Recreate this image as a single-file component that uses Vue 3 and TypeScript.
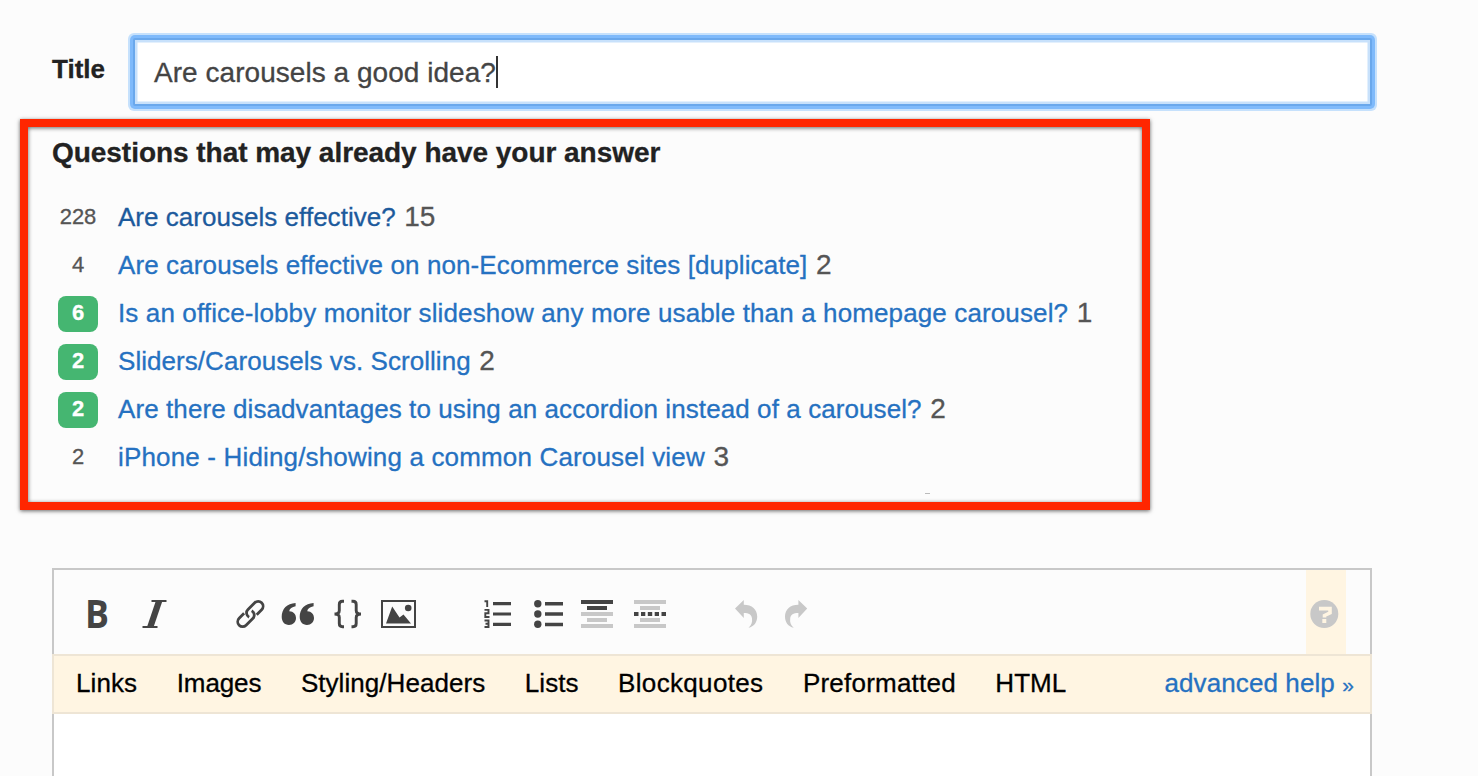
<script setup lang="ts">
interface Suggestion {
  votes: number
  answered: boolean
  visited?: boolean
  title: string
  tracking: number
  answers: number
}

interface Topic {
  name: string
  tracking: number
}

const title = 'Are carousels a good idea?'

const suggestions: Suggestion[] = [
  { votes: 228, answered: false, visited: true, title: 'Are carousels effective?', tracking: 0.03, answers: 15 },
  { votes: 4, answered: false, title: 'Are carousels effective on non-Ecommerce sites [duplicate]', tracking: 0.11, answers: 2 },
  { votes: 6, answered: true, title: 'Is an office-lobby monitor slideshow any more usable than a homepage carousel?', tracking: 0.125, answers: 1 },
  { votes: 2, answered: true, title: 'Sliders/Carousels vs. Scrolling', tracking: 0.05, answers: 2 },
  { votes: 2, answered: true, title: 'Are there disadvantages to using an accordion instead of a carousel?', tracking: 0.085, answers: 2 },
  { votes: 2, answered: false, title: 'iPhone - Hiding/showing a common Carousel view', tracking: 0.16, answers: 3 },
]

const helpTopics: Topic[] = [
  { name: 'Links', tracking: 0.1 },
  { name: 'Images', tracking: -0.1 },
  { name: 'Styling/Headers', tracking: 0.06 },
  { name: 'Lists', tracking: 0.05 },
  { name: 'Blockquotes', tracking: 0.34 },
  { name: 'Preformatted', tracking: 0.22 },
  { name: 'HTML', tracking: 0 },
]
</script>

<template>
  <main class="page">
    <div class="title-row">
      <label class="title-label">Title</label>
      <div class="title-input"><span>{{ title }}</span><i class="caret"></i></div>
    </div>

    <section class="suggestions">
      <h2>Questions that may already have your answer</h2>
      <ul>
        <li v-for="s in suggestions" :key="s.title">
          <span class="votes" :class="{ answered: s.answered }">{{ s.votes }}</span>
          <a :class="{ visited: s.visited }" :style="{ letterSpacing: s.tracking + 'px' }">{{ s.title }}</a>
          <span class="answers">{{ s.answers }}</span>
        </li>
      </ul>
      <i class="speck"></i>
    </section>

    <section class="editor">
      <div class="toolbar">
        <svg class="ico bold" width="20" height="28" viewBox="0 0 20 28">
          <text x="-3" y="27.7" font-size="38.5" font-weight="700" textLength="24" lengthAdjust="spacingAndGlyphs">B</text>
        </svg>
        <svg class="ico italic" width="25" height="28" viewBox="0 0 25 28">
          <path d="M9.5 1H24.5M.5 27H15.5" fill="none" stroke="#444" stroke-width="2" />
          <path d="M13.8 1H20.4L11.6 27H5Z" />
        </svg>
        <svg class="ico link" width="30" height="28" viewBox="0 0 30 28">
          <g transform="translate(14.4 14) rotate(-45)" fill="none" stroke="#444" stroke-width="2.8">
            <path d="M-4 -4.9H-11A4.9 4.9 0 0 0 -11 4.9H-1.5A4.9 4.9 0 0 0 3.2 -1.4" />
            <path d="M4 4.9H11A4.9 4.9 0 0 0 11 -4.9H1.5A4.9 4.9 0 0 0 -3.2 1.4" />
          </g>
        </svg>
        <svg class="ico quote" width="34" height="28" viewBox="0 0 34 28">
          <path d="M14.6 3V6.2C11 6.8 8.7 8.4 8.2 11.2C12 11 15 14 15 18C15 22 12 25 8 25C3.5 25 .7 21.7 .7 16.8C.7 9 6 3.4 14.6 3Z" />
          <path transform="translate(18)" d="M14.6 3V6.2C11 6.8 8.7 8.4 8.2 11.2C12 11 15 14 15 18C15 22 12 25 8 25C3.5 25 .7 21.7 .7 16.8C.7 9 6 3.4 14.6 3Z" />
        </svg>
        <svg class="ico code" width="28" height="28" viewBox="0 0 28 28">
          <path d="M10 1.3H8.5Q5.3 1.3 5.3 4.5V10.5Q5.3 14 .5 14Q5.3 14 5.3 17.5V23.5Q5.3 26.7 8.5 26.7H10M17.5 1.3H19Q22.2 1.3 22.2 4.5V10.5Q22.2 14 27 14Q22.2 14 22.2 17.5V23.5Q22.2 26.7 19 26.7H17.5" fill="none" stroke="#444" stroke-width="2.9" />
        </svg>
        <svg class="ico image" width="35" height="28" viewBox="0 0 35 28">
          <rect x="1" y="1" width="33" height="26" fill="none" stroke="#444" stroke-width="2" />
          <path d="M5 23.5L11.2 6.5L18.5 17.5L22.5 14.5L30 23.5Z" />
          <circle cx="27.2" cy="8" r="3.3" />
        </svg>
        <svg class="ico ol" width="27" height="28" viewBox="0 0 27 28">
          <path d="M9 2H27V5.2H9ZM9 12.4H27V15.6H9ZM9 22.8H27V26H9Z" />
          <path d="M.5 1.2H3.2V7M.5 9.9H4.5V13.3H1.3V17H5.5M.5 20.5H4.5V27H.5M1.5 23.7H4.5" fill="none" stroke="#444" stroke-width="1.9" />
        </svg>
        <svg class="ico ul" width="29" height="28" viewBox="0 0 29 28">
          <circle cx="3.8" cy="3.8" r="3.7" /><circle cx="3.8" cy="14" r="3.7" /><circle cx="3.8" cy="24.3" r="3.7" />
          <path d="M11 2H29V5.5H11ZM11 12.3H29V15.8H11ZM11 22.7H29V26.2H11Z" />
        </svg>
        <svg class="ico heading" width="32" height="28" viewBox="0 0 32 28">
          <path d="M0 0H32V4H0ZM6 6H26V10H6Z" />
          <path class="pale" d="M0 12H32V16H0ZM6 18H26V22H6ZM0 24H32V28H0Z" />
        </svg>
        <svg class="ico rule" width="32" height="28" viewBox="0 0 32 28">
          <path class="pale" d="M0 0H32V4H0ZM6 6H26V10H6ZM6 18H26V22H6ZM0 24H32V28H0Z" />
          <path d="M0 12H4.500V16H0ZM7 12H11.300V16H7ZM13.800 12H18.200V16H13.800ZM20.700 12H25V16H20.700ZM27.500 12H32V16H27.500Z" />
        </svg>
        <svg class="ico undo" width="23" height="28" viewBox="0 0 23 28">
          <path class="pale" d="M0 8.6L8.8 0V4.8C17 4.8 22.2 9.5 22.2 16.5C22.2 22.5 19 26.5 13.5 27.8C16.5 25 17.5 22.5 17 18.5C16.5 14.5 14 13 8.8 13V18Z" />
        </svg>
        <svg class="ico redo" width="23" height="28" viewBox="0 0 23 28">
          <path class="pale" transform="translate(22.2) scale(-1 1)" d="M0 8.6L8.8 0V4.8C17 4.8 22.2 9.5 22.2 16.5C22.2 22.5 19 26.5 13.5 27.8C16.5 25 17.5 22.5 17 18.5C16.5 14.5 14 13 8.8 13V18Z" />
        </svg>
        <div class="help-toggle">
          <svg class="ico" width="29" height="28" viewBox="0 0 29 28">
            <circle class="pale" cx="14.3" cy="14" r="14" />
            <path d="M9 8.6H20V12.8L14.5 15.5V17.5" fill="none" stroke="#fff5e2" stroke-width="3.6" />
            <path d="M12.3 19H16.3V23H12.3Z" fill="#fff5e2" />
          </svg>
        </div>
      </div>
      <nav class="help-bar">
        <span v-for="t in helpTopics" :key="t.name" :style="{ letterSpacing: t.tracking + 'px' }">{{ t.name }}</span>
        <a>advanced help <small>»</small></a>
      </nav>
      <div class="text-area"></div>
    </section>
  </main>
</template>

<style>
body {
  background: #fcfcfc;
}
</style>

<style scoped>
.page {
  box-sizing: border-box;
  height: 776px;
  overflow: hidden;
  padding-top: 38px;
  background: #fcfcfc;
  font-family: "Liberation Sans", Arial, sans-serif;
  font-size: 26px;
  color: #444;
  -webkit-text-stroke: 0.3px currentColor;
}
.title-row {
  display: flex;
  height: 68px;
  padding-left: 52px;
}
.title-label {
  width: 81px;
  line-height: 62px;
  font-weight: 700;
  color: #222;
}
.title-input {
  box-sizing: border-box;
  display: flex;
  align-items: center;
  width: 1239px;
  height: 68px;
  padding-left: 19px;
  border: 2px solid #6aa8ec;
  border-radius: 2px;
  background: #fff;
  box-shadow: inset 0 0 0 2.5px #c8e1fb, 0 0 0 3px #7fbafb, 0 0 0 5px #c6e1fc;
  font-size: 28px;
  letter-spacing: 0.04px;
}
.title-input span {
  padding-top: 2px;
}
.caret {
  width: 2px;
  height: 32px;
  background: #333;
}
.suggestions {
  position: relative;
  box-sizing: border-box;
  width: 1130px;
  height: 391px;
  margin: 13px 0 0 20px;
  padding: 10px 0 0 24px;
  border: 8px solid #ff2600;
  box-shadow: 0 1px 4px rgba(0, 0, 0, 0.6), inset 0 1px 4px rgba(0, 0, 0, 0.6);
}
h2 {
  margin: 0;
  line-height: 32px;
  font-size: 28px;
  letter-spacing: -0.04px;
  color: #222;
}
ul {
  margin: 23px 0 0;
  padding: 0;
  list-style: none;
}
li {
  display: flex;
  height: 48px;
  padding-left: 6px;
  line-height: 50px;
  white-space: nowrap;
}
.votes {
  width: 40px;
  height: 36px;
  margin: 8px 20px 0 0;
  border-radius: 8px;
  line-height: 33px;
  text-align: center;
  font-size: 22px;
  color: #555;
}
.votes.answered {
  background: #45b671;
  font-weight: 700;
  color: #fff;
}
a {
  color: #2571c1;
}
a.visited {
  color: #1c5a9c;
}
.answers {
  margin-left: 8.5px;
  font-size: 28px;
  color: #555;
}
.speck {
  position: absolute;
  left: 897px;
  top: 366px;
  width: 5px;
  height: 1px;
  background: #bbb;
}
.editor {
  box-sizing: border-box;
  width: 1320px;
  height: 220px;
  margin: 58px 0 0 52px;
  border: 2px solid #c8c8c8;
  border-bottom: 0;
}
.toolbar {
  display: flex;
  align-items: center;
  height: 84px;
}
.ico {
  flex: none;
  margin-top: 4px;
  overflow: visible;
  fill: #444;
}
.ico text {
  font-family: "Open Sans", sans-serif;
  -webkit-text-stroke: 0;
  stroke: none;
}
.pale {
  fill: #c8c8c8;
}
.bold { margin-left: 34px; }
.italic { margin-left: 34px; }
.link { margin-left: 69px; }
.quote { margin-left: 15px; }
.code { margin-left: 19px; }
.image { margin-left: 19px; }
.ol { margin-left: 68px; }
.ul { margin-left: 23px; }
.heading { margin-left: 18px; }
.rule { margin-left: 21px; }
.undo { margin-left: 69px; }
.redo { margin-left: 27px; }
.help-toggle {
  display: flex;
  align-items: center;
  box-sizing: border-box;
  width: 40px;
  height: 84px;
  margin-left: auto;
  margin-right: 24px;
  padding-left: 4px;
  background: #fff5e2;
}
.help-bar {
  display: flex;
  box-sizing: border-box;
  height: 60px;
  margin: 0 -2px;
  padding: 0 16px 0 22px;
  border: 2px solid #eee5d5;
  background: #fff5e2;
  line-height: 54px;
  color: #000;
}
.help-bar span {
  margin-right: 39.5px;
}
.help-bar a {
  margin-left: auto;
  letter-spacing: 0.1px;
}
.help-bar small {
  font-size: 21px;
}
.text-area {
  height: 64px;
  background: #fff;
}
</style>
